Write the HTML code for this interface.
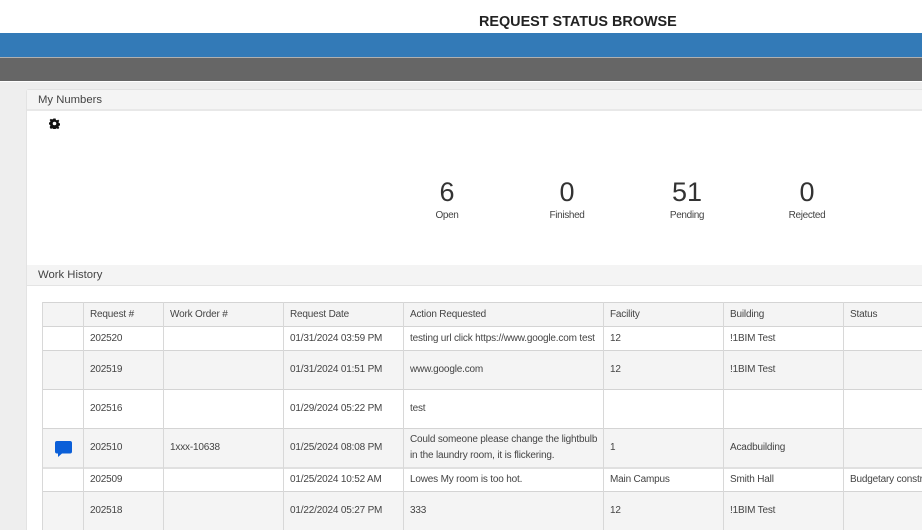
<!DOCTYPE html>
<html><head><meta charset="utf-8">
<style>
html,body{margin:0;padding:0;width:922px;height:530px;overflow:hidden;background:#eee;font-family:"Liberation Sans",sans-serif;color:#333}
div{position:absolute;box-sizing:border-box}
.t{white-space:nowrap;font-size:10px;letter-spacing:-.18px;line-height:14px;color:#444;margin-top:1px}
.n{font-size:27px;line-height:30px;color:#333;text-align:center;width:80px}
.l{font-size:10px;letter-spacing:-.35px;line-height:14px;color:#444;text-align:center;width:80px}
.v{width:1px;background:#d8d8d8;top:302px;height:228px}
.h{left:42px;right:0;height:1px;background:#d4d4d4}
.r{left:43px;right:0}
.p{font-size:11.3px;letter-spacing:0}
</style></head><body>
<div style="left:0;top:0;width:922px;height:33px;background:#fff"></div>
<div style="left:479px;top:14px;font-size:14.4px;line-height:16px;font-weight:bold;color:#222;white-space:nowrap">REQUEST STATUS BROWSE</div>
<div style="left:0;top:33px;width:922px;height:24px;background:#337ab7"></div>
<div style="left:0;top:57px;width:922px;height:1px;background:#b0b0b0"></div>
<div style="left:0;top:58px;width:922px;height:23px;background:#666"></div>
<div style="left:0;top:81px;width:922px;height:1px;background:#fff"></div>

<div style="left:26px;top:89px;width:896px;height:441px;background:#fff;border-left:1px solid #e3e3e3;border-top:1px solid #e3e3e3;border-top-left-radius:3px"></div>
<div style="left:27px;top:90px;width:895px;height:19px;background:#f4f4f4"></div>
<div style="left:27px;top:109px;width:895px;height:2px;background:#e8e8e8"></div>
<div class="t p" style="left:38px;top:92px">My Numbers</div>

<svg style="position:absolute;left:49px;top:118px" width="11" height="11" viewBox="0 0 11 11"><path fill="#111" fill-rule="evenodd" d="M4.4 0.5h2.2l.3 1.4 1.1.5 1.2-.8 1.1 1.3-.8 1.1.4 1.1 1.400.3v2l-1.400.3-.4 1.100.8 1.100-1.300 1.200-1.100-.8-1.100.5-.3 1.300H4.400l-.3-1.300-1.100-.5-1.100.8L.6 9l.8-1.100L1 6.800l-1-.3v-2l1-.3.4-1.100-.8-1.100 1.300-1.300 1.100.8 1.100-.5zM5.500 3.700a1.800 1.800 0 1 0 0 3.600 1.800 1.800 0 0 0 0-3.600z"/></svg>

<div class="n" style="left:407px;top:177px">6</div>
<div class="l" style="left:407px;top:209px">Open</div>
<div class="n" style="left:527px;top:177px">0</div>
<div class="l" style="left:527px;top:209px">Finished</div>
<div class="n" style="left:647px;top:177px">51</div>
<div class="l" style="left:647px;top:209px">Pending</div>
<div class="n" style="left:767px;top:177px">0</div>
<div class="l" style="left:767px;top:209px">Rejected</div>

<div style="left:27px;top:265px;width:895px;height:20px;background:#f4f4f4"></div>
<div style="left:27px;top:285px;width:895px;height:1px;background:#e4e4e4"></div>
<div class="t p" style="left:38px;top:267px">Work History</div>

<div class="r" style="top:303px;height:23px;background:#f4f4f4"></div>
<div class="r" style="top:351px;height:38px;background:#f4f4f4"></div>
<div class="r" style="top:429px;height:39px;background:#f4f4f4"></div>
<div class="r" style="top:492px;height:38px;background:#f4f4f4"></div>

<div class="h" style="top:302px"></div>
<div class="h" style="top:326px"></div>
<div class="h" style="top:350px"></div>
<div class="h" style="top:389px"></div>
<div class="h" style="top:428px"></div>
<div class="h" style="top:467px;height:2px;background:#e0e0e0"></div>
<div class="h" style="top:491px"></div>
<div class="v" style="left:42px"></div>
<div class="v" style="left:83px"></div>
<div class="v" style="left:163px"></div>
<div class="v" style="left:283px"></div>
<div class="v" style="left:403px"></div>
<div class="v" style="left:603px"></div>
<div class="v" style="left:723px"></div>
<div class="v" style="left:843px"></div>

<div class="t" style="left:90px;top:307px">Request #</div>
<div class="t" style="left:170px;top:307px">Work Order #</div>
<div class="t" style="left:290px;top:307px">Request Date</div>
<div class="t" style="left:410px;top:307px">Action Requested</div>
<div class="t" style="left:610px;top:307px">Facility</div>
<div class="t" style="left:730px;top:307px">Building</div>
<div class="t" style="left:850px;top:307px">Status</div>

<div class="t" style="left:90px;top:331px">202520</div>
<div class="t" style="left:290px;top:331px">01/31/2024 03:59 PM</div>
<div class="t" style="left:410px;top:331px">testing url click https://www.google.com test</div>
<div class="t" style="left:610px;top:331px">12</div>
<div class="t" style="left:730px;top:331px">!1BIM Test</div>

<div class="t" style="left:90px;top:362px">202519</div>
<div class="t" style="left:290px;top:362px">01/31/2024 01:51 PM</div>
<div class="t" style="left:410px;top:362px">www.google.com</div>
<div class="t" style="left:610px;top:362px">12</div>
<div class="t" style="left:730px;top:362px">!1BIM Test</div>

<div class="t" style="left:90px;top:401px">202516</div>
<div class="t" style="left:290px;top:401px">01/29/2024 05:22 PM</div>
<div class="t" style="left:410px;top:401px">test</div>

<svg style="position:absolute;left:55px;top:441px" width="17" height="16" viewBox="0 0 17 16"><path fill="#0b5fd8" d="M2 0h13a2 2 0 0 1 2 2v8.500a2 2 0 0 1-2 2H7L3 16v-3.500H2a2 2 0 0 1-2-2V2a2 2 0 0 1 2-2z"/></svg>
<div class="t" style="left:90px;top:440px">202510</div>
<div class="t" style="left:170px;top:440px">1xxx-10638</div>
<div class="t" style="left:290px;top:440px">01/25/2024 08:08 PM</div>
<div class="t" style="left:410px;top:432px">Could someone please change the lightbulb</div>
<div class="t" style="left:410px;top:448px">in the laundry room, it is flickering.</div>
<div class="t" style="left:610px;top:440px">1</div>
<div class="t" style="left:730px;top:440px">Acadbuilding</div>

<div class="t" style="left:90px;top:472px">202509</div>
<div class="t" style="left:290px;top:472px">01/25/2024 10:52 AM</div>
<div class="t" style="left:410px;top:472px">Lowes My room is too hot.</div>
<div class="t" style="left:610px;top:472px">Main Campus</div>
<div class="t" style="left:730px;top:472px">Smith Hall</div>
<div class="t" style="left:850px;top:472px">Budgetary constraints</div>

<div class="t" style="left:90px;top:503px">202518</div>
<div class="t" style="left:290px;top:503px">01/22/2024 05:27 PM</div>
<div class="t" style="left:410px;top:503px">333</div>
<div class="t" style="left:610px;top:503px">12</div>
<div class="t" style="left:730px;top:503px">!1BIM Test</div>
</body></html>
